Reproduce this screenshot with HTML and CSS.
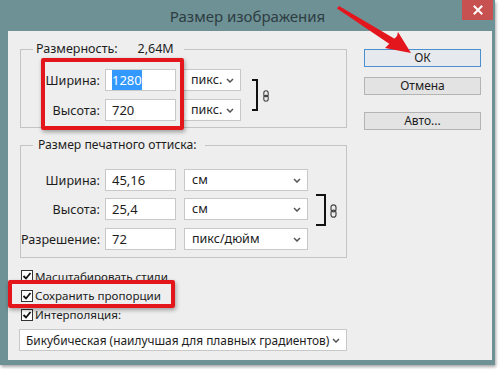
FILE: index.html
```html
<!DOCTYPE html>
<html lang="ru">
<head>
<meta charset="utf-8">
<link rel="stylesheet" href="styles.css">
</head>
<body>
<div class="window">
  <div class="titlebar">
    <span></span>
    <span class="title">Размер изображения</span>
    <span class="close">
      <svg width="10" height="10" viewBox="0 0 10 10"><path d="M1.5 1.5 L8.5 8.5 M8.5 1.5 L1.5 8.5" stroke="#fff" stroke-width="2" stroke-linecap="square"/></svg>
    </span>
  </div>
  <div class="client">
    <div class="left">
      <div class="group g1">
        <div class="legend"><span>Размерность:</span><span class="mp">2,64М</span></div>
        <div class="body">
          <div class="fields">
            <div class="row">
              <span class="label">Ширина:</span>
              <span class="input"><span class="hl">1280</span></span>
              <span class="select small">пикс.<svg class="chev" width="8" height="5" viewBox="0 0 8 5"><path d="M1 1 L4 4 L7 1" fill="none" stroke="#555" stroke-width="1.5"/></svg></span>
            </div>
            <div class="row">
              <span class="label">Высота:</span>
              <span class="input">720</span>
              <span class="select small">пикс.<svg class="chev" width="8" height="5" viewBox="0 0 8 5"><path d="M1 1 L4 4 L7 1" fill="none" stroke="#555" stroke-width="1.5"/></svg></span>
            </div>
          </div>
          <div class="link l1">
            <span class="bracket"></span>
            <svg class="chain" width="6" height="12" viewBox="0 0 6 12"><rect x="0.8" y="0.7" width="4.4" height="5.9" rx="2.2" fill="none" stroke="#444" stroke-width="1.1"/><rect x="0.8" y="5.4" width="4.4" height="5.9" rx="2.2" fill="none" stroke="#444" stroke-width="1.1"/></svg>
          </div>
        </div>
      </div>

      <div class="group g2">
        <div class="legend"><span>Размер печатного оттиска:</span></div>
        <div class="body">
          <div class="fields">
            <div class="row">
              <span class="label">Ширина:</span>
              <span class="input">45,16</span>
              <span class="select wide">см<svg class="chev" width="8" height="5" viewBox="0 0 8 5"><path d="M1 1 L4 4 L7 1" fill="none" stroke="#555" stroke-width="1.5"/></svg></span>
            </div>
            <div class="row">
              <span class="label">Высота:</span>
              <span class="input">25,4</span>
              <span class="select wide">см<svg class="chev" width="8" height="5" viewBox="0 0 8 5"><path d="M1 1 L4 4 L7 1" fill="none" stroke="#555" stroke-width="1.5"/></svg></span>
            </div>
            <div class="row">
              <span class="label">Разрешение:</span>
              <span class="input">72</span>
              <span class="select wide">пикс/дюйм<svg class="chev" width="8" height="5" viewBox="0 0 8 5"><path d="M1 1 L4 4 L7 1" fill="none" stroke="#555" stroke-width="1.5"/></svg></span>
            </div>
          </div>
          <div class="link l2">
            <span class="bracket"></span>
            <svg class="chain" width="7" height="14" viewBox="0 0 7 14"><rect x="1" y="0.8" width="5" height="7" rx="2.5" fill="none" stroke="#444" stroke-width="1.2"/><rect x="1" y="6.2" width="5" height="7" rx="2.5" fill="none" stroke="#444" stroke-width="1.2"/></svg>
          </div>
        </div>
      </div>

      <div class="checks">
        <div class="check c1"><span class="cb"><svg width="10" height="10" viewBox="0 0 10 10"><path d="M1.5 5 L4 7.5 L8.5 2" fill="none" stroke="#111" stroke-width="1.8"/></svg></span>Масштабировать стили</div>
        <div class="check"><span class="cb"><svg width="10" height="10" viewBox="0 0 10 10"><path d="M1.5 5 L4 7.5 L8.5 2" fill="none" stroke="#111" stroke-width="1.8"/></svg></span>Сохранить пропорции</div>
        <div class="check"><span class="cb"><svg width="10" height="10" viewBox="0 0 10 10"><path d="M1.5 5 L4 7.5 L8.5 2" fill="none" stroke="#111" stroke-width="1.8"/></svg></span>Интерполяция:</div>
      </div>

      <div class="select interp"><span class="itext">Бикубическая (наилучшая для плавных градиентов)</span><svg class="chev" width="8" height="5" viewBox="0 0 8 5"><path d="M1 1 L4 4 L7 1" fill="none" stroke="#555" stroke-width="1.5"/></svg></div>
    </div>

    <div class="right">
      <div class="btn ok">ОК</div>
      <div class="btn">Отмена</div>
      <div class="btn auto">Авто...</div>
    </div>
  </div>

  <div class="redbox rb1"></div>
  <div class="redbox rb2"></div>
  <svg class="arrow" width="90" height="60" viewBox="330 0 90 60">
    <polygon points="337,8.5 339,6 395,39 391,45" fill="#e4161d"/>
    <polygon points="411,53 385,48 391,42 397,36 398,32" fill="#e4161d"/>
  </svg>
</div>
</body>
</html>
```

FILE: styles.css
```css
* { box-sizing: border-box; }
html, body { margin: 0; padding: 0; background: #ffffff; }
body {
  font-family: "Noto Sans", "Open Sans", sans-serif;
  font-size: 12.5px;
  color: #1d1d1d;
  width: 500px;
  height: 369px;
  overflow: hidden;
}
.window {
  position: relative;
  width: 495px;
  height: 365px;
  background: #6d9195;
  box-shadow: 1px 2px 3px rgba(0,0,0,0.35);
}
.titlebar {
  height: 31px;
  display: grid;
  grid-template-columns: 1fr auto 1fr;
  align-items: start;
}
.title {
  font-size: 15px;
  line-height: 32px;
  color: #2e3d42;
}
.close {
  justify-self: end;
  width: 31px;
  height: 20px;
  margin-right: 2px;
  background: #c75050;
  display: flex;
  align-items: center;
  justify-content: center;
}
.client {
  margin-left: 8px;
  width: 484px;
  height: 329px;
  background: #eeeeee;
  display: flex;
  padding: 10px 0 0 12px;
}
.left { width: 327px; display: flex; flex-direction: column; margin-top: 8px; }
.group {
  border: 1px solid #c4c4c4;
}
.legend {
  display: flex;
  width: max-content;
  height: 16px;
  line-height: 16px;
  margin: -9px 0 0 12px;
  padding: 0 4px 0 3px;
  background: #eeeeee;
}
.legend .mp { margin-left: 20px; }
.g1 .legend { padding-right: 10px; }
.g2 .legend { padding-left: 5px; padding-right: 8px; font-size: 12.2px; }
.body { display: flex; align-items: center; }
.g1 .body { margin-top: 12px; padding-bottom: 6px; }
.g2 { margin-top: 17px; }
.g2 .body { margin-top: 16px; padding-bottom: 7px; }
.fields { display: flex; flex-direction: column; gap: 8px; }
.row { display: flex; align-items: center; height: 22px; font-size: 12.6px; }
.label { width: 79px; text-align: right; }
.input {
  margin-left: 5px;
  width: 71px;
  height: 22px;
  background: #fff;
  border: 1px solid #c8c8c8;
  padding-left: 6px;
  line-height: 20px;
  font-size: 13px;
}
.hl { background: #3399ff; color: #fff; padding: 1px 0; }
.select {
  height: 22px;
  background: #fff;
  border: 1px solid #c8c8c8;
  padding-left: 7px;
  line-height: 20px;
  display: flex;
  align-items: center;
  justify-content: space-between;
  padding-right: 6px;
  white-space: nowrap;
}
.row .select { font-size: 12.5px; }
.select.small { margin-left: 7px; width: 58px; }
.select.wide { margin-left: 8px; width: 124px; }
.chev { flex: none; }
.link { display: flex; align-items: center; }
.bracket {
  display: block;
  border: 2px solid #111;
  border-left: none;
}
.l1 { margin-left: 11px; }
.l1 .bracket { width: 6px; height: 32px; }
.l1 .chain { margin-left: 5px; margin-top: 2px; }
.l2 { margin-left: 8px; }
.l2 .bracket { width: 10px; height: 32px; }
.l2 .chain { margin-left: 4px; margin-top: 2px; }
.g2 .fields { gap: 7px; }
.g2 .row:nth-child(3) { margin-top: 1px; }
.checks { margin-top: 8px; display: flex; flex-direction: column; margin-left: 1px; font-size: 11.6px; }
.check { display: flex; align-items: center; height: 20px; }
.check + .check { height: 19px; }
.cb {
  width: 12px;
  height: 12px;
  border: 1px solid #333;
  background: #fff;
  display: flex;
  align-items: center;
  justify-content: center;
  margin-right: 2px;
}
.interp {
  margin-top: 5px;
  margin-left: -1px;
  width: 328px;
  padding-left: 6px;
  padding-right: 6px;
  font-size: 11.9px;
}
.right {
  margin-left: 17px;
  width: 117px;
  display: flex;
  flex-direction: column;
  padding-top: 8px;
  font-size: 12px;
}
.btn {
  height: 18px;
  line-height: 16px;
  text-align: center;
  background: #e3e3e3;
  border: 1px solid #b4b4b4;
}
.btn + .btn { margin-top: 10px; }
.btn.auto { margin-top: 17px; }
.btn.ok { border-color: #4a8fce; background: #e6eaee; }
.redbox {
  position: absolute;
  border: 4px solid #e3161c;
  border-radius: 2px;
  box-shadow: 1px 2px 4px rgba(0,0,0,0.35);
}
.rb1 { left: 41px; top: 58px; width: 143px; height: 72px; }
.rb2 { left: 8px; top: 280px; width: 167px; height: 28px; }
.arrow { position: absolute; left: 330px; top: 0; }
```
